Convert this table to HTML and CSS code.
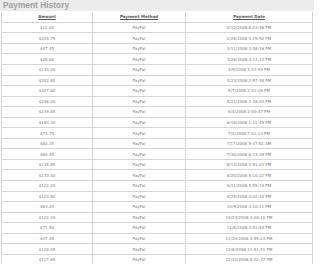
FILE: index.html
```html
<!DOCTYPE html>
<html lang="en">
<head>
  <meta charset="UTF-8" />
  <title>Payment History</title>
  <link rel="stylesheet" href="styles.css">
</head>
<body>

  <div class="history-box">
    <!-- Box Title -->
    <div class="box-title">Payment History</div>

    <!-- Payments Table -->
    <table class="history">
      <thead>
        <tr>
          <th class="col-amount"><a href="#">Amount</a></th>
          <th class="col-method"><a href="#">Payment Method</a></th>
          <th class="col-date"><a href="#">Payment Date</a></th>
        </tr>
      </thead>
      <tbody>
        <tr><td>$12.00</td><td>PayPal</td><td>2/12/2008 8:23:46 PM</td></tr>
        <tr><td>$204.75</td><td>PayPal</td><td>2/26/2008 4:19:50 PM</td></tr>
        <tr><td>$47.45</td><td>PayPal</td><td>3/11/2008 3:58:16 PM</td></tr>
        <tr><td>$28.60</td><td>PayPal</td><td>3/26/2008 4:11:33 PM</td></tr>
        <tr><td>$130.00</td><td>PayPal</td><td>4/9/2008 5:23:59 PM</td></tr>
        <tr><td>$202.80</td><td>PayPal</td><td>4/23/2008 2:57:48 PM</td></tr>
        <tr><td>$327.60</td><td>PayPal</td><td>5/7/2008 2:41:29 PM</td></tr>
        <tr><td>$206.00</td><td>PayPal</td><td>5/21/2008 4:16:03 PM</td></tr>
        <tr><td>$239.85</td><td>PayPal</td><td>6/4/2008 2:00:47 PM</td></tr>
        <tr><td>$183.30</td><td>PayPal</td><td>6/18/2008 1:12:49 PM</td></tr>
        <tr><td>$74.75</td><td>PayPal</td><td>7/2/2008 7:01:13 PM</td></tr>
        <tr><td>$80.35</td><td>PayPal</td><td>7/17/2008 5:37:52 AM</td></tr>
        <tr><td>$60.45</td><td>PayPal</td><td>7/30/2008 6:13:39 PM</td></tr>
        <tr><td>$135.85</td><td>PayPal</td><td>8/13/2008 2:51:03 PM</td></tr>
        <tr><td>$170.30</td><td>PayPal</td><td>8/20/2008 5:10:22 PM</td></tr>
        <tr><td>$122.20</td><td>PayPal</td><td>9/11/2008 5:55:19 PM</td></tr>
        <tr><td>$123.50</td><td>PayPal</td><td>9/25/2008 4:02:44 PM</td></tr>
        <tr><td>$83.20</td><td>PayPal</td><td>10/9/2008 3:10:11 PM</td></tr>
        <tr><td>$122.20</td><td>PayPal</td><td>10/23/2008 3:28:10 PM</td></tr>
        <tr><td>$71.50</td><td>PayPal</td><td>11/6/2008 3:51:54 PM</td></tr>
        <tr><td>$47.45</td><td>PayPal</td><td>11/20/2008 4:55:23 PM</td></tr>
        <tr><td>$128.05</td><td>PayPal</td><td>12/8/2008 11:51:51 PM</td></tr>
        <tr><td>$117.65</td><td>PayPal</td><td>12/22/2008 8:02:37 PM</td></tr>
      </tbody>
    </table>
  </div>

</body>
</html>
```

FILE: styles.css
```css
/* === Body === */
body {
  background: #ffffff;
  margin: 0;
  font-family: 'DejaVu Sans', Verdana, sans-serif;
}

/* === Box === */
.history-box {
  width: 314px;
}

.box-title {
  height: 11px;
  padding-left: 3px;
  background: #ececec;
  color: #a0a0a0;
  font-family: 'Liberation Sans', Arial, sans-serif;
  font-size: 8.4px;
  font-weight: 700;
  line-height: 11px;
}

/* === Table === */
.history {
  width: 312px;
  margin: 1px 0 0 1px;
  border-collapse: collapse;
  table-layout: fixed;
}

.history th,
.history td {
  border: 1px solid #d4d4d4;
  padding: 0;
  height: 9.55px;
  text-align: center;
  color: #7c7c7c;
  font-size: 4px;
  font-weight: 400;
  line-height: 9px;
}

.history thead th {
  border-top: none;
  height: 9.8px;
}

.history th a {
  color: #555555;
  font-weight: 700;
  text-decoration: underline;
}

.col-amount {
  width: 90px;
}

.col-method {
  width: 92px;
}
```
